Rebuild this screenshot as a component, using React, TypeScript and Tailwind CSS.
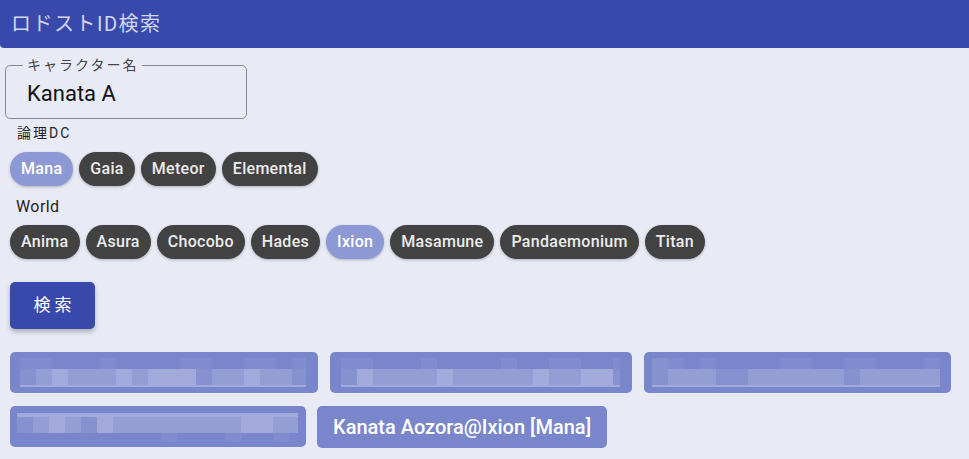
import React from "react";

const dcs = ["Mana", "Gaia", "Meteor", "Elemental"];
const worlds = ["Anima", "Asura", "Chocobo", "Hades", "Ixion", "Masamune", "Pandaemonium", "Titan"];

const shade = ["", "bg-white/5", "bg-white/10", "bg-white/20", "bg-white/30"];

type Row = { h: string; cells: string };

// pixelated (mosaic) placeholder for the hidden names
function Mosaic({ rows, w }: { rows: Row[]; w: string }) {
  return (
    <div className={`flex flex-col overflow-hidden ${w}`}>
      {rows.map((r, i) => (
        <div key={i} className={`flex ${r.h}`}>
          {r.cells.split("").map((c, j) => (
            <div key={j} className={`w-4 shrink-0 h-full ${shade[Number(c)]}`} />
          ))}
        </div>
      ))}
    </div>
  );
}

function Chip({ label, on }: { label: string; on?: boolean }) {
  return (
    <button
      className={`h-[34px] rounded-full px-[11px] text-[16px] tracking-[0.3px] font-medium shadow-[0_1px_3px_rgba(0,0,0,0.25)] ${
        on ? "bg-[#8c99d5] text-white" : "bg-[#424242] text-[#ececec]"
      }`}
    >
      {label}
    </button>
  );
}

const results: { box: string; w: string; rows: Row[] }[] = [
  {
    box: "w-[308px] pl-[10px] pt-[6px]",
    w: "w-[286px]",
    rows: [
      { h: "h-[11px]", cells: "110001000011001101" },
      { h: "h-[16px]", cells: "234333434442334332" },
      { h: "h-[2px]", cells: "444444444444444444" },
    ],
  },
  {
    box: "w-[302px] pl-[11px] pt-[6px]",
    w: "w-[279px]",
    rows: [
      { h: "h-[11px]", cells: "110001000010011001" },
      { h: "h-[16px]", cells: "243333433333433442" },
      { h: "h-[2px]", cells: "444444444444444444" },
    ],
  },
  {
    box: "w-[307px] pl-[8px] pt-[6px]",
    w: "w-[288px]",
    rows: [
      { h: "h-[11px]", cells: "210100001100110001" },
      { h: "h-[16px]", cells: "233322333333233333" },
      { h: "h-[2px]", cells: "444444444444444444" },
    ],
  },
  {
    box: "w-[296px] pl-[7px] pt-[7px]",
    w: "w-[281px]",
    rows: [
      { h: "h-[4px]", cells: "444444444444444444" },
      { h: "h-[16px]", cells: "234324333333334433" },
      { h: "h-[9px]", cells: "000000000100010010" },
    ],
  },
];

export default function App() {
  return (
    <div className="w-[969px] h-[459px] overflow-hidden bg-[#e8eaf6] font-['Roboto','Noto_Sans_CJK_JP',sans-serif] text-[#1f1f1f]">
      <header className="h-12 flex items-center px-[11px] bg-[#3949ab] rounded-bl-[4px] text-[20px] tracking-[1.5px] text-[#d3d7f0]">
        ロドストID検索
      </header>

      <div className="pl-[5px] pt-[17px]">
        {/* outlined text field */}
        <div className="relative w-[242px] h-[54px] border border-[#8a8a92] rounded-[5px] flex items-center pl-[21px]">
          <span className="absolute -top-[10px] left-[17px] px-[4px] bg-[#e8eaf6] text-[14px] tracking-[2px] leading-[18px] text-[#444]">
            キャラクター名
          </span>
          <span className="text-[22px] pt-[2px] text-[#111]">Kanata A</span>
        </div>
      </div>

      <div className="px-[10px]">
        <div className="pl-[7px] pt-[4px] text-[14px] tracking-[2px] leading-[20px]">論理DC</div>
        <div className="flex gap-[6px] mt-[9px]">
          {dcs.map((d) => (
            <Chip key={d} label={d} on={d === "Mana"} />
          ))}
        </div>

        <div className="pl-[6px] pt-[11px] text-[16px] tracking-[0.4px] leading-[20px]">World</div>
        <div className="flex gap-[6px] mt-[8px]">
          {worlds.map((w) => (
            <Chip key={w} label={w} on={w === "Ixion"} />
          ))}
        </div>

        <button className="mt-[23px] w-[85px] h-[47px] rounded-[5px] bg-[#3949ab] text-white text-[17px] tracking-[4px] pl-[4px] shadow-[0_3px_5px_rgba(0,0,0,0.25)]">
          検索
        </button>

        <div className="mt-[23px] flex flex-wrap gap-x-[12px] gap-y-[13px] w-[945px]">
          {results.map((r, i) => (
            <div key={i} className={`h-[41px] rounded-[5px] bg-[#7986cb] ${r.box}`}>
              <Mosaic rows={r.rows} w={r.w} />
            </div>
          ))}
          <button className="h-[42px] -ml-[1px] rounded-[5px] bg-[#7986cb] px-[16px] text-white text-[20px] font-medium">
            Kanata Aozora@Ixion [Mana]
          </button>
        </div>
      </div>
    </div>
  );
}
